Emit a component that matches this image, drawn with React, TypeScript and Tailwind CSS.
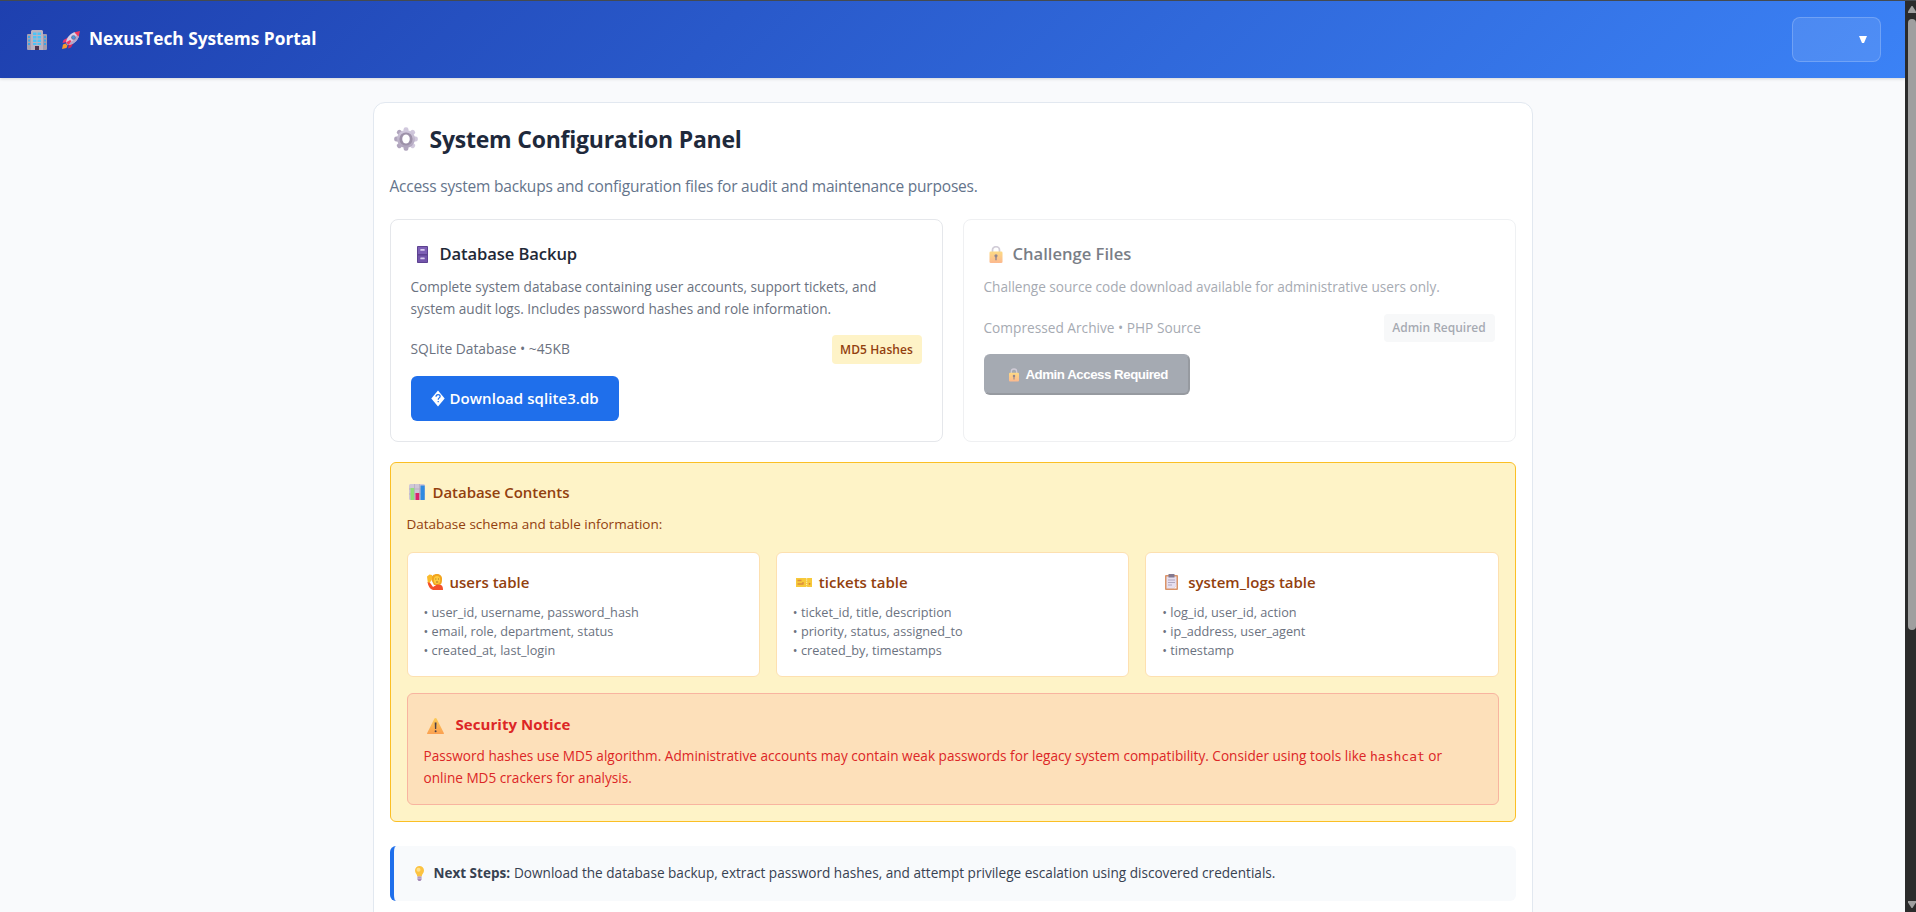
import type { ReactNode } from "react";

function Building() {
  return (
    <svg viewBox="0 0 20 20" className="h-5 w-5">
      <rect x="0" y="4" width="6" height="16" rx="1" fill="#a5a0b3" />
      <rect x="14" y="4" width="6" height="16" rx="1" fill="#a19cae" />
      <path d="M5 0h10l1 1v19H4V1z" fill="#b9b3c2" />
      <path d="M1 6h2v2H1zM1 9.500h2v2H1zM1 13h2v2H1zM17 6h2v2h-2zM17 9.500h2v2h-2zM17 13h2v2h-2z" fill="#3ba5e8" />
      <path d="M6 2.500h3.500V5H6zM10.500 2.500H14V5h-3.500zM6 6h3.500v2.500H6zM10.500 6H14v2.500h-3.500zM6 9.500h3.500V12H6zM10.500 9.500H14V12h-3.500zM6 13h3.500v2H6zM10.500 13H14v2h-3.500z" fill="#4cc3f7" />
      <path d="M8 16h4v4H8z" fill="#4a3550" />
    </svg>
  );
}

function Rocket() {
  return (
    <svg viewBox="0 0 18 18" className="h-[18px] w-[18px]">
      <path d="M6 6.500 1.500 9 .5 12l4.500-1z" fill="#f0356b" />
      <path d="M11.500 12 9 16.500l-3 1 1-4.500z" fill="#d42a5c" />
      <path d="M1 13.500 3.500 12.500l2 2-1 2.500L0 18z" fill="#f79a2e" />
      <path d="M4 12C4 7.500 8 2 13.500 1L17 4.500C16 10 10.500 14 6 14z" fill="#d9d0e6" />
      <path d="M6 14c4.500 0 10-4 11-9.500l-1.500-1.500C13 8 9 12 5 13z" fill="#b3a6c9" />
      <path d="M12.500 1.300 18 0l-1.300 5.500c-1.200-.5-3.700-3-4.200-4.200z" fill="#f0395f" />
      <circle cx="11.500" cy="6.500" r="2.300" fill="#6d6a9e" />
      <circle cx="11.500" cy="6.500" r="1.400" fill="#3f9be0" />
      <path d="M4 11.500 8 9l1.500 1-3 4z" fill="#ef3a63" />
    </svg>
  );
}

function Gear() {
  return (
    <svg viewBox="-12 -12 24 24" className="h-6 w-6">
      <defs>
        <linearGradient id="gear-fill" x1="0" y1="0" x2="0" y2="1">
          <stop offset="0" stopColor="#d3cbdf" />
          <stop offset="1" stopColor="#aea2bb" />
        </linearGradient>
      </defs>
      <g fill="url(#gear-fill)">
        {[0, 45, 90, 135].map((a) => (
          <rect key={a} x="-2.400" y="-11.800" width="4.800" height="23.600" rx="2" transform={`rotate(${a})`} />
        ))}
        <circle r="9" />
      </g>
      <circle r="5.300" fill="none" stroke="#9d91a9" strokeWidth="2.600" />
      <ellipse rx="3.600" ry="4.600" fill="#fff" />
    </svg>
  );
}

function Cabinet() {
  return (
    <svg viewBox="0 0 11 17" className="h-[17px] w-[11px]">
      <rect width="11" height="17" rx=".8" fill="#5d4291" />
      <rect x="1" y="1" width="9" height="7" fill="#7d5fb5" />
      <rect x="1" y="9.500" width="9" height="6.500" fill="#7355ab" />
      <rect x="3.300" y="3" width="4.400" height="1.800" rx=".6" fill="#d9cdf0" />
      <rect x="3.300" y="11.500" width="4.400" height="1.800" rx=".6" fill="#d9cdf0" />
    </svg>
  );
}

function Lock({ className }: { className: string }) {
  return (
    <svg viewBox="0 0 13 17" className={className}>
      <defs>
        <linearGradient id="lock-fill" x1="0" y1="0" x2="0" y2="1">
          <stop offset="0" stopColor="#fcc334" />
          <stop offset="1" stopColor="#fb8b45" />
        </linearGradient>
      </defs>
      <path d="M3 8V4a3.500 3.300 0 0 1 7 0v4" fill="none" stroke="#b3abbd" strokeWidth="1.700" />
      <rect y="5.500" width="13" height="11.500" rx="1.300" fill="url(#lock-fill)" />
      <circle cx="6.500" cy="9.800" r="1.600" fill="#4b3748" />
      <path d="M5.800 10h1.400v4.200H5.800z" fill="#4b3748" />
    </svg>
  );
}

function Chart() {
  return (
    <svg viewBox="0 0 16 16" className="h-4 w-4">
      <rect width="16" height="16" rx="1.500" fill="#cfc7d6" />
      <path d="M0 5h16M0 10h16M5.500 0v16M10.500 0v16" stroke="#b3aabd" strokeWidth=".7" />
      <rect x="1.500" y="4" width="3.700" height="12" fill="#8fe07a" />
      <rect x="6.500" y="9" width="3.700" height="7" fill="#d9246b" />
      <rect x="11.500" y="1.500" width="4.200" height="14.500" fill="#2f8ae0" />
    </svg>
  );
}

function Person() {
  return (
    <svg viewBox="0 0 16 16" className="h-4 w-4">
      <path d="M4.500 6C4 2 6.500 0 10 0s5.500 2.500 5 6c0 3-1 5-3 5H7z" fill="#f2a51e" />
      <ellipse cx="10" cy="6" rx="3.200" ry="4" fill="#ffcb3d" />
      <path d="M2.500 8 6 13l4-2.500 4 .5c1.500.8 2 2 2 5H6C3 15 1 12 .5 8z" fill="#f4502b" />
      <path d="M0 2.500 2.500.5 5 1v4L3 8.500H.8z" fill="#fbbb2c" />
      <path d="M8.300 5h1M11 5h1M9 8h2.200" stroke="#8a5a2b" strokeWidth=".8" />
    </svg>
  );
}

function Ticket() {
  return (
    <svg viewBox="0 0 16 9" className="h-[9px] w-4">
      <path d="M0 0h10l.7.800L11.500 0H16v9h-4.500l-.8-.8-.7.800H0z" fill="#f7c93a" />
      <path d="M1.500 2.500h4M1.500 6h6M7 4v2.500" stroke="#dc8c3e" strokeWidth="1.300" />
      <path d="M10.700 1.500v6" stroke="#fff3c4" strokeWidth="1" strokeDasharray="1.200 1" />
      <circle cx="13.600" cy="5.800" r=".9" fill="#d97c35" />
    </svg>
  );
}

function Clipboard() {
  return (
    <svg viewBox="0 0 13 16" className="h-4 w-[13px]">
      <rect y="1" width="13" height="15" rx="1" fill="#db9468" />
      <path d="M1.500 2.500h10v9l-3 3h-7z" fill="#e6dff0" />
      <path d="M11.500 11.500v3h-3z" fill="#f8f4fb" />
      <path d="M3.500 0h6v3.500h-6z" fill="#84798f" />
      <path d="M3 6h7M3 8.500h7M3 11h4" stroke="#aaa0b8" strokeWidth=".9" />
    </svg>
  );
}

function Warning() {
  return (
    <svg viewBox="0 0 17 16" className="h-4 w-[17px]">
      <defs>
        <linearGradient id="warning-fill" x1="0" y1="0" x2="0" y2="1">
          <stop offset="0" stopColor="#fccb57" />
          <stop offset="1" stopColor="#fba051" />
        </linearGradient>
      </defs>
      <path d="M8.500 0c.5 0 .9.300 1.200.8L16.800 15c.3.600 0 1-.6 1H.8c-.6 0-.9-.4-.6-1L7.300.8C7.600.3 8 0 8.500 0z" fill="url(#warning-fill)" />
      <path d="M7.700 4.500h1.800L9.200 11H8z" fill="#4a4048" />
      <circle cx="8.600" cy="13.200" r="1" fill="#4a4048" />
    </svg>
  );
}

function Bulb() {
  return (
    <svg viewBox="0 0 9 15" className="h-[15px] w-[9px]">
      <path d="M4.500 0A4.500 4.500 0 0 1 9 4.500C9 7 7 8 6.700 10.500H2.300C2 8 0 7 0 4.500A4.500 4.500 0 0 1 4.500 0z" fill="#fcc341" />
      <circle cx="3.500" cy="3.700" r="2" fill="#fee08a" />
      <path d="M2.500 10.500h4v3L5.500 15h-2l-1-1.500z" fill="#a58bb5" />
      <path d="M2.500 12.200h4" stroke="#d9cbe2" strokeWidth=".8" />
    </svg>
  );
}

function UnknownGlyph() {
  return (
    <svg viewBox="0 0 14 17" className="h-[17px] w-[14px]">
      <path d="M7 0.500 13.700 8.500 7 16.500 0.300 8.500z" fill="#fff" />
      <path d="M5 6.800c0-1.400.9-2.100 2.100-2.100 1.200 0 2 .7 2 1.700 0 1.500-1.900 1.500-1.900 3.300M7.200 11v1.300" fill="none" stroke="#1f6feb" strokeWidth="1.200" />
    </svg>
  );
}

function TableCard({ icon, title, rows }: { icon: ReactNode; title: string; rows: string[] }) {
  return (
    <div className="h-[125px] rounded-md border border-[#fde0b0] bg-white p-4">
      <div className="flex h-[26px] items-center">
        <span className="flex w-[26px] items-center pl-[3px]">{icon}</span>
        <h4 className="text-[15px] leading-[26px] font-semibold text-[#92400e]">{title}</h4>
      </div>
      <div className="mt-2 text-[12.7px] leading-[19px] text-[#6b7280]">
        {rows.map((row) => (
          <div key={row}>• {row}</div>
        ))}
      </div>
    </div>
  );
}

export default function App() {
  return (
    <div className="flex h-[912px] w-[1916px] overflow-hidden bg-[#f9fafc] font-['Open_Sans',sans-serif]">
      <div className="flex min-w-0 flex-1 flex-col">
        <header className="flex h-[78px] shrink-0 items-center border-t border-[#444a50] bg-[linear-gradient(135deg,#1e40af_0%,#3b82f6_100%)] pr-6 pl-[27px] shadow-[0_1px_3px_rgba(0,0,0,0.15)]">
          <Building />
          <span className="ml-[15px]">
            <Rocket />
          </span>
          <h1 className="mb-[2px] ml-[9px] text-[17.3px] leading-6 font-bold text-white">NexusTech Systems Portal</h1>
          <button className="ml-auto flex h-[45px] w-[89px] items-center justify-end rounded-lg border border-white/20 bg-white/10 pr-[13px]">
            <svg viewBox="0 0 8 7" className="h-[7px] w-2">
              <path d="M0 0h8L5 7H3z" fill="#fff" />
            </svg>
          </button>
        </header>

        <main className="mx-auto mt-6 h-[900px] w-[1160px] shrink-0 rounded-xl border border-[#e2e8f0] bg-white p-4">
          <div className="flex h-10 items-center pl-1">
            <Gear />
            <h2 className="ml-[12px] text-[23px] leading-10 font-bold tracking-[-0.23px] text-[#1e293b]">System Configuration Panel</h2>
          </div>
          <p className="mt-[14px] text-[15.5px] leading-[26px] tracking-[-0.2px] text-[#64748b]">
            Access system backups and configuration files for audit and maintenance purposes.
          </p>

          <div className="mt-5 grid grid-cols-2 gap-5">
            <section className="h-[223px] rounded-lg border border-[#e5e7eb] p-5">
              <div className="flex h-7 items-center">
                <span className="flex w-[29px] items-center pl-[6px]">
                  <Cabinet />
                </span>
                <h3 className="text-[16.6px] leading-7 font-semibold tracking-[-0.1px] text-[#1f2937]">Database Backup</h3>
              </div>
              <p className="mt-2 text-[13.6px] leading-[22.4px] text-[#6b7280]">
                Complete system database containing user accounts, support tickets, and
                <br />
                <span className="tracking-[-0.01px]">system audit logs. Includes password hashes and role information.</span>
              </p>
              <div className="mt-[14px] flex items-center justify-between">
                <span className="pt-px text-[13.8px] text-[#6b7280]">SQLite Database • ~45KB</span>
                <span className="flex h-[29px] w-[90px] items-center justify-center rounded bg-[#fef3c7] pt-px text-[12px] font-semibold tracking-[0.1px] text-[#92400e]">
                  MD5 Hashes
                </span>
              </div>
              <button className="mt-3 flex h-[45px] w-[208px] items-center rounded-md bg-[#1f6feb] pl-5 text-[15px] font-semibold text-white">
                <UnknownGlyph />
                <span className="ml-[5px] whitespace-nowrap tracking-[0.06px]">Download sqlite3.db</span>
              </button>
            </section>

            <section className="h-[223px] rounded-lg border border-[#e5e7eb] p-5 opacity-60">
              <div className="flex h-7 items-center">
                <span className="flex w-[29px] items-center pl-[5px]">
                  <Lock className="h-[17px] w-[14px]" />
                </span>
                <h3 className="text-[16.6px] leading-7 font-semibold text-[#1f2937]">Challenge Files</h3>
              </div>
              <p className="mt-2 text-[13.6px] leading-[22.4px] text-[#6b7280]">
                Challenge source code download available for administrative users only.
              </p>
              <div className="mt-4 flex items-center justify-between">
                <span className="text-[13.7px] text-[#6b7280]">Compressed Archive • PHP Source</span>
                <span className="flex h-[28px] w-[111px] items-center justify-center rounded bg-[#f3f4f6] text-[12px] font-semibold text-[#6b7280]">
                  Admin Required
                </span>
              </div>
              <button className="mt-3 flex h-[41px] w-[206px] items-center rounded-md border-2 border-[#6b7280] border-r-[#525862] border-b-[#525862] bg-[#6b7280] pl-[23px] font-['Liberation_Sans',sans-serif] text-[13.3px] font-bold tracking-[-0.48px] text-white">
                <Lock className="h-[14px] w-[10px]" />
                <span className="ml-[7px] whitespace-nowrap">Admin Access Required</span>
              </button>
            </section>
          </div>

          <section className="mt-5 h-[360px] rounded-md border border-[#fbbf24] bg-[#fef3c7] p-4">
            <div className="flex h-[26px] items-center">
              <span className="flex w-[26px] items-center pl-[2px]">
                <Chart />
              </span>
              <h3 className="text-[15px] leading-[26px] font-semibold tracking-[-0.05px] text-[#92400e]">Database Contents</h3>
            </div>
            <p className="mt-2 text-[13.5px] leading-[22px] text-[#92400e]">Database schema and table information:</p>
            <div className="mt-[17px] grid grid-cols-3 gap-4">
              <TableCard
                icon={<Person />}
                title="users table"
                rows={["user_id, username, password_hash", "email, role, department, status", "created_at, last_login"]}
              />
              <TableCard
                icon={<Ticket />}
                title="tickets table"
                rows={["ticket_id, title, description", "priority, status, assigned_to", "created_by, timestamps"]}
              />
              <TableCard
                icon={<Clipboard />}
                title="system_logs table"
                rows={["log_id, user_id, action", "ip_address, user_agent", "timestamp"]}
              />
            </div>
            <div className="mt-4 h-[112px] rounded-md border border-[#f8b4a0] bg-[#fde0ba] p-4">
              <div className="flex h-7 items-center">
                <span className="flex w-8 items-center pt-[3px] pl-[3px]">
                  <Warning />
                </span>
                <h4 className="text-[15px] leading-7 font-bold tracking-[0.05px] text-[#dc2626]">Security Notice</h4>
              </div>
              <p className="mt-[7px] text-[13.6px] leading-[22px] text-[#dc2626]">
                <span className="tracking-[0.012px]">
                  Password hashes use MD5 algorithm. Administrative accounts may contain weak passwords for legacy system
                  compatibility. Consider using tools like{" "}
                </span>
                <code className="font-['DejaVu_Sans_Mono',monospace] text-[13px] leading-none">hashcat</code> or
                <br />
                online MD5 crackers for analysis.
              </p>
            </div>
          </section>

          <div className="mt-6 flex h-[55px] items-center rounded-md border-l-4 border-[#1f6feb] bg-[#f8fafc] pl-[21px] text-[13.6px] text-[#374151]">
            <Bulb />
            <strong className="ml-[10px] text-[13.5px] font-bold">Next Steps:</strong>
            <span className="ml-1">
              Download the database backup, extract password hashes, and attempt privilege escalation using discovered
              credentials.
            </span>
          </div>
        </main>
      </div>

      <div className="flex w-[11px] shrink-0 flex-col items-end border-t border-[#444a50] bg-[#2b2b2b]">
        <svg viewBox="0 0 8 7" className="mt-[5px] h-[7px] w-2">
          <path d="M3.500 0h1L8 5.500V7H0V5.500z" fill="#9f9f9f" />
        </svg>
        <div className="mt-[6px] h-[611px] w-2 rounded-full bg-[#9f9f9f]" />
        <svg viewBox="0 0 8 7" className="mt-auto mb-1 h-[7px] w-2">
          <path d="M0 0h8v1.500L4.500 7h-1L0 1.500z" fill="#9f9f9f" />
        </svg>
      </div>
    </div>
  );
}
